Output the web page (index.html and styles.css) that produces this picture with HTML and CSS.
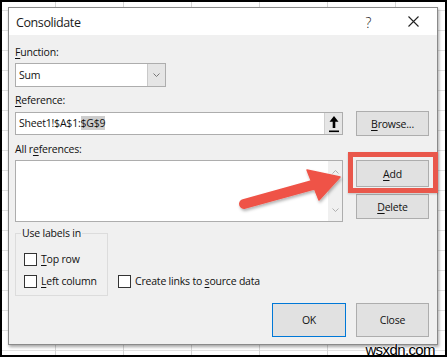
FILE: index.html
```html
<!DOCTYPE html>
<html>
<head>
<meta charset="utf-8">
<link rel="stylesheet" href="styles.css">
</head>
<body>
<div class="screen">
  <div class="dialog">
    <div class="titlebar">
      <span class="title">Consolidate</span>
      <span class="tb-btn help">?</span>
      <span class="tb-btn close"><svg width="11" height="11" viewBox="0 0 11 11"><path d="M0.5 0.5L10.5 10.5M10.5 0.5L0.5 10.5" stroke="#222" stroke-width="1.1" fill="none"/></svg></span>
    </div>
    <div class="body">
      <div class="label"><u>F</u>unction:</div>
      <div class="select">
        <span class="select-val">Sum</span>
        <span class="select-btn"><svg width="7" height="4" viewBox="0 0 7 4"><path d="M0.5 0.5L3.5 3.5L6.5 0.5" stroke="#6a6a6a" stroke-width="0.9" fill="none"/></svg></span>
      </div>
      <div class="label l-ref"><u>R</u>eference:</div>
      <div class="row ref-row">
        <div class="refinput">
          <span class="ref-text">Sheet1!$A$1:<span class="sel">$G$9</span></span>
          <span class="collapse-btn"><svg width="10" height="18" viewBox="0 0 10 18"><path d="M5 1L9.5 6.8H6.3V13H3.7V6.8H0.5Z" fill="#000"/><rect x="0" y="15.5" width="10" height="1.6" fill="#000"/></svg></span>
        </div>
        <button class="btn"><u>B</u>rowse...</button>
      </div>
      <div class="label l-all">All r<u>e</u>ferences:</div>
      <div class="row list-row">
        <div class="listbox">
          <div class="scroll">
            <svg width="7" height="4" viewBox="0 0 7 4"><path d="M0.5 3.5L3.5 0.5L6.5 3.5" stroke="#a8a8a8" stroke-width="0.9" fill="none"/></svg>
            <svg width="7" height="4" viewBox="0 0 7 4"><path d="M0.5 0.5L3.5 3.5L6.5 0.5" stroke="#a8a8a8" stroke-width="0.9" fill="none"/></svg>
          </div>
        </div>
        <div class="btncol">
          <div class="hl-wrap">
            <button class="btn add"><u>A</u>dd</button>
            <span class="hl"></span>
          </div>
          <button class="btn"><u>D</u>elete</button>
        </div>
      </div>
      <div class="opts">
        <fieldset class="group">
          <legend>Use labels in</legend>
          <label class="check first"><span class="cb"></span><span><u>T</u>op row</span></label>
          <label class="check"><span class="cb"></span><span><u>L</u>eft column</span></label>
        </fieldset>
        <label class="check links"><span class="cb"></span><span>Create links to <u>s</u>ource data</span></label>
      </div>
      <div class="footer">
        <button class="btn ok">OK</button>
        <button class="btn">Close</button>
      </div>
    </div>
  </div>
  <svg class="arrow" width="447" height="357" viewBox="0 0 447 357">
    <defs>
      <filter id="sh" x="-20%" y="-40%" width="140%" height="180%">
        <feDropShadow dx="1" dy="2" stdDeviation="1.5" flood-color="#000" flood-opacity="0.3"/>
      </filter>
    </defs>
    <g filter="url(#sh)" fill="#ef5347" stroke="#ef5347">
      <line x1="244" y1="204" x2="314" y2="184.6" stroke-width="10" stroke-linecap="round"/>
      <polygon points="307,170 340,177 319,200" stroke-width="1.5" stroke-linejoin="round"/>
    </g>
  </svg>
  <div class="wm">wsxdn.com</div>
</div>
</body>
</html>
```
FILE: styles.css
```css
body {
  margin: 0;
}

.screen {
  position: relative;
  width: 447px;
  height: 357px;
  box-sizing: border-box;
  border: 2px solid #000;
  padding: 5px 0 0 6px;
  background-color: #fff;
  background-image:
    linear-gradient(to right, #d6d6d6 1px, transparent 1px),
    linear-gradient(to bottom, #e2e2e2 1px, transparent 1px);
  background-size: 68px 100%, 100% 20px;
  background-position: 53px 0, 0 8px;
  font-family: "Open Sans", sans-serif;
  overflow: hidden;
}

.dialog {
  width: 430px;
  box-sizing: border-box;
  border: 1px solid #8a8a8a;
  background: #f0f0f0;
  box-shadow: 1px 2px 3px rgba(0, 0, 0, 0.35);
}

.titlebar {
  height: 27px;
  background: #fff;
  display: flex;
  align-items: center;
  padding-left: 7px;
  padding-right: 1px;
}

.title {
  flex: 1;
  font-size: 12.5px;
  letter-spacing: -0.4px;
  color: #1a1a1a;
  padding-top: 2px;
}

.tb-btn {
  width: 45px;
  height: 27px;
  display: flex;
  align-items: center;
  justify-content: center;
}

.help {
  font-size: 14px;
  font-weight: 300;
  color: #222;
  padding-top: 1px;
}

.body {
  padding: 10px 8px 7px 6px;
  font-size: 10.5px;
  letter-spacing: -0.2px;
  color: #111;
}

.label {
  line-height: 14px;
}

u {
  text-decoration-thickness: 1px;
  text-underline-offset: 1.5px;
}

.select {
  margin-top: 4px;
  width: 151px;
  height: 24px;
  box-sizing: border-box;
  border: 1px solid #adadad;
  background: #fff;
  display: flex;
}

.select-val {
  flex: 1;
  padding-left: 3px;
  line-height: 22px;
}

.select-btn {
  width: 17px;
  background: #e5e5e5;
  border-left: 1px solid #c9c9c9;
  display: flex;
  align-items: center;
  justify-content: center;
}

.l-ref {
  margin-top: 6px;
}

.row {
  display: flex;
  justify-content: space-between;
}

.ref-row {
  margin-top: 4px;
  align-items: center;
  height: 25px;
}

.refinput {
  width: 328px;
  height: 23px;
  box-sizing: border-box;
  border: 1px solid #adadad;
  background: #fff;
  display: flex;
}

.ref-text {
  flex: 1;
  padding-left: 3px;
  line-height: 21px;
}

.sel {
  background: #cdcdcd;
}

.collapse-btn {
  width: 17px;
  background: #e6e6e6;
  border-left: 1px solid #d0d0d0;
  display: flex;
  align-items: center;
  justify-content: center;
}

.btn {
  font: inherit;
  letter-spacing: inherit;
  color: inherit;
  width: 73px;
  height: 25px;
  box-sizing: border-box;
  border: 1px solid #adadad;
  background: #e1e1e1;
  padding: 0;
  margin: 0;
}

.l-all {
  margin-top: 6px;
}

.list-row {
  margin-top: 4px;
}

.listbox {
  width: 328px;
  height: 62px;
  box-sizing: border-box;
  border: 1px solid #adadad;
  background: #fff;
  display: flex;
  justify-content: flex-end;
}

.scroll {
  width: 14px;
  background: #f0f0f0;
  display: flex;
  flex-direction: column;
  justify-content: space-between;
  align-items: center;
  padding: 9px 0 9px;
}

.btncol {
  display: flex;
  flex-direction: column;
  gap: 7px;
}

.add {
  height: 27px;
  display: block;
}

.hl-wrap {
  position: relative;
  height: 27px;
}

.hl {
  position: absolute;
  left: -8px;
  top: -8px;
  width: 90px;
  height: 41px;
  box-sizing: border-box;
  border: 5px solid #e9574b;
  box-shadow: 0 1px 2px rgba(0, 0, 0, 0.2);
}

.opts {
  display: flex;
  align-items: flex-end;
  margin-top: 4px;
}

.group {
  margin: 0;
  width: 93px;
  box-sizing: border-box;
  border: 1px solid #dcdcdc;
  padding: 0 0 7px 5px;
  min-width: 0;
}

.group legend {
  padding: 0 1px;
  line-height: 14px;
}

.check {
  display: flex;
  align-items: center;
  gap: 4px;
  line-height: 14px;
  white-space: nowrap;
}

.group .check {
  margin-left: 3px;
}

.check.first {
  margin-top: 12px;
  margin-bottom: 8px;
}

.cb {
  width: 13px;
  height: 13px;
  box-sizing: border-box;
  border: 1px solid #333;
  background: #fff;
}

.links {
  margin-left: 10px;
  margin-bottom: 8px;
}

.footer {
  display: flex;
  justify-content: flex-end;
  gap: 10px;
  margin-top: 7px;
}

.footer .btn {
  height: 34px;
}

.ok {
  width: 74px;
  border-color: #0078d7 !important;
}

.arrow {
  position: absolute;
  left: -2px;
  top: -2px;
  pointer-events: none;
}

.wm {
  position: absolute;
  right: 10px;
  bottom: -2px;
  font-family: "Liberation Sans", sans-serif;
  font-size: 15px;
  letter-spacing: -0.6px;
  line-height: 15px;
  color: #000;
  text-shadow: 0 0 2px #fff, 0 0 2px #fff, 0 0 1px #fff;
}
```
